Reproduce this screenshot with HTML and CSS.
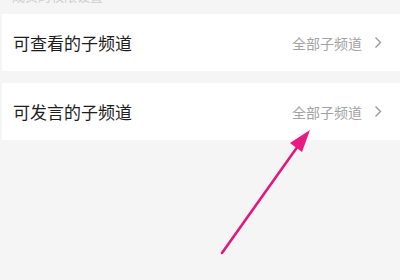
FILE: index.html
```html
<!DOCTYPE html>
<html>
<head>
<meta charset="utf-8">
<link rel="stylesheet" href="styles.css">
</head>
<body>
<div class="page">
  <div class="section-title"><span class="title-text">成员的权限设置</span></div>
  <div class="row first">
    <span class="label">可查看的子频道</span>
    <span class="value">全部子频道<svg class="chev" width="8" height="13" viewBox="0 0 8 13"><path d="M1.5 1.5 L6.5 6.5 L1.5 11.5" fill="none" stroke="#9a9a9a" stroke-width="1.4"/></svg></span>
  </div>
  <div class="row second">
    <span class="label">可发言的子频道</span>
    <span class="value">全部子频道<svg class="chev" width="8" height="13" viewBox="0 0 8 13"><path d="M1.5 1.5 L6.5 6.5 L1.5 11.5" fill="none" stroke="#9a9a9a" stroke-width="1.4"/></svg></span>
  </div>
  <svg class="arrow" width="400" height="280" viewBox="0 0 400 280">
    <line x1="222" y1="253" x2="298" y2="146" stroke="#e3187c" stroke-width="2.6" stroke-linecap="round"/>
    <polygon points="310,130 290,143 302,152" fill="#ea1a84"/>
  </svg>
</div>
</body>
</html>
```
FILE: styles.css
```css
html, body {
  margin: 0;
  padding: 0;
  background: #f5f5f5;
}
.page {
  position: relative;
  width: 400px;
  height: 280px;
  overflow: hidden;
  background: #f5f5f5;
  font-family: "Noto Sans CJK SC", "Noto Sans", sans-serif;
}
.section-title {
  height: 14px;
  overflow: hidden;
  padding-left: 12px;
}
.title-text {
  display: block;
  margin-top: -11px;
  font-size: 13px;
  line-height: 14px;
  color: #cfcfcf;
}
.row {
  display: flex;
  align-items: center;
  justify-content: space-between;
  height: 57px;
  background: #fff;
  padding: 0 18px 0 11px;
  margin-left: 2px;
}
.row.second {
  margin-top: 12px;
}
.label {
  font-size: 17px;
  color: #1e1e1e;
}
.value {
  display: flex;
  align-items: center;
  font-size: 14px;
  color: #a3a3a3;
}
.chev {
  margin-left: 12px;
}
.arrow {
  position: absolute;
  left: 0;
  top: 0;
}
```
